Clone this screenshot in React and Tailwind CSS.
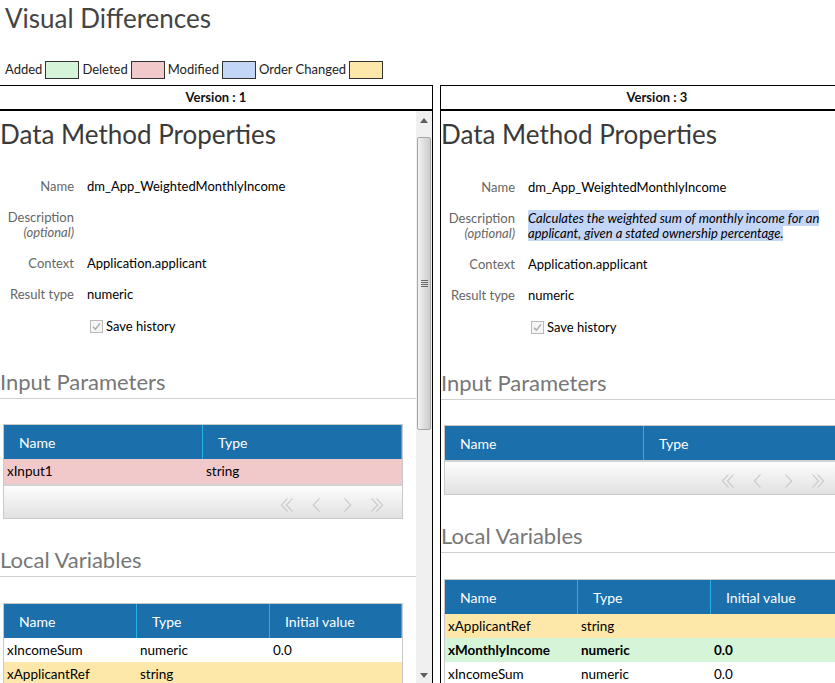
import React from 'react';

const legend = [
  { label: 'Added', swatch: 'bg-[#d5f5d8]' },
  { label: 'Deleted', swatch: 'bg-[#f2c9cb]' },
  { label: 'Modified', swatch: 'bg-[#c4d6f8]' },
  { label: 'Order Changed', swatch: 'bg-[#fde8a9]' },
];

const Chevrons = ({ d }) => (
  <svg width="18" height="18" viewBox="0 0 18 18">
    <path d={d} fill="none" stroke="#c4c4c4" strokeWidth="1.1" />
  </svg>
);

const Pager = () => (
  <div className="flex h-[34px] items-center justify-end gap-[12px] border-t-2 border-[#d2d2d2] bg-gradient-to-b from-[#fdfdfd] to-[#e1e1e1] pr-[16px] pt-[6px]">
    <Chevrons d="M9.5 2.5 L3.5 9 L9.5 15.5 M14.5 2.5 L8.5 9 L14.5 15.5" />
    <Chevrons d="M11.5 2.5 L5.5 9 L11.5 15.5" />
    <Chevrons d="M6.5 2.5 L12.5 9 L6.5 15.5" />
    <Chevrons d="M3.5 2.5 L9.5 9 L3.5 15.5 M8.5 2.5 L14.5 9 L8.5 15.5" />
  </div>
);

const Table = ({ cols, rows, rowH = 'h-[24px]', pager, headH = 'h-[34px]' }) => (
  <div className="ml-[3px] w-[400px] shrink-0 border border-[#c9c9c9]">
    <div className={`flex ${headH} bg-[#1b6fab]`}>
      {cols.map((c) => (
        <div
          key={c.label}
          className={`${c.w} flex items-center border-r border-[#27b2e6] pl-[15px] text-[14px] text-white`}
        >
          {c.label}
        </div>
      ))}
    </div>
    {rows.map((r) => (
      <div key={r.cells[0]} className={`flex ${rowH} ${r.tone} ${r.bold ? 'font-bold' : ''}`}>
        {r.cells.map((cell, i) => (
          <div key={i} className={`${cols[i].w} flex items-center pl-[3px] text-[13.5px] text-black`}>
            {cell}
          </div>
        ))}
      </div>
    ))}
    {pager && <Pager />}
  </div>
);

const Scrollbar = () => (
  <div className="flex w-[16px] shrink-0 flex-col items-center bg-[#f0f0f0]">
    <div className="flex h-[19px] items-center justify-center">
      <svg width="8" height="5" viewBox="0 0 8 5">
        <path d="M0 5 L4 0 L8 5 Z" fill="#606060" />
      </svg>
    </div>
    <div className="mt-[7px] flex h-[293px] w-[14px] items-center justify-center rounded-[2px] border border-[#a6a6a6] bg-gradient-to-r from-[#f2f2f2] via-[#dedede] to-[#cdcdcd]">
      <div className="flex flex-col gap-[1px]">
        <div className="h-[1px] w-[7px] bg-[#6a6a6a]" />
        <div className="h-[1px] w-[7px] bg-[#6a6a6a]" />
        <div className="h-[1px] w-[7px] bg-[#6a6a6a]" />
        <div className="h-[1px] w-[7px] bg-[#6a6a6a]" />
      </div>
    </div>
    <div className="flex-1" />
    <div className="flex h-[15px] items-center justify-center">
      <svg width="8" height="5" viewBox="0 0 8 5">
        <path d="M0 0 L4 5 L8 0 Z" fill="#606060" />
      </svg>
    </div>
  </div>
);

const Prop = ({ label, optional, children }) => (
  <div className="flex">
    <div className="w-[74px] shrink-0 text-right text-[#666]">
      {label}
      {optional && <div className="italic">(optional)</div>}
    </div>
    <div className="ml-[13px] text-black">{children}</div>
  </div>
);

const SectionTitle = ({ children, mt }) => (
  <h3 className={`${mt} border-b border-[#d0d0d0] pb-[4px] text-[22px] leading-[24px] text-[#777]`}>{children}</h3>
);

const Panel = ({ version, description, inputRows, localRows, right }) => (
  <div
    className={`flex shrink-0 flex-col border-black ${right ? 'ml-[7px] w-[434px] border-l border-r' : 'w-[433px] border-r'}`}
  >
    <div className="flex h-[26px] shrink-0 items-center justify-center border-t border-b-2 border-black text-[13px] font-bold text-[#111]">
      Version : {version}
    </div>
    <div className="flex min-h-0 flex-1">
      <div className="min-w-0 flex-1 overflow-hidden">
        <h2 className="mt-[7px] whitespace-nowrap text-[26px] leading-[32px] text-[#3a3a3a]">Data Method Properties</h2>
        <div className={`${right ? 'mt-[30px]' : 'mt-[29px]'} flex flex-col gap-[16px] text-[13px] leading-[15px]`}>
          <Prop label="Name">dm_App_WeightedMonthlyIncome</Prop>
          <Prop label="Description" optional>
            {description ? (
              <span className="bg-[#c4d6f8] italic">
                Calculates the weighted sum of monthly income for an
                <br />
                applicant, given a stated ownership percentage.
              </span>
            ) : null}
          </Prop>
          <Prop label="Context">Application.applicant</Prop>
          <Prop label="Result type">numeric</Prop>
          <div className="flex h-[16px] items-center pl-[90px]">
            <svg width="13" height="13" viewBox="0 0 13 13">
              <rect x="0.5" y="0.5" width="12" height="12" fill="#f5f5f5" stroke="#b9b9b9" />
              <path d="M3 6.8 L5.4 9.3 L10 3.4" fill="none" stroke="#a9a9a9" strokeWidth="1.4" />
            </svg>
            <span className="ml-[3px] text-[13px] text-black">Save history</span>
          </div>
        </div>
        <SectionTitle mt="mt-[36px]">Input Parameters</SectionTitle>
        <div className="mt-[25px]">
          <Table
            cols={[
              { label: 'Name', w: 'w-[199px]' },
              { label: 'Type', w: 'w-[199px]' },
            ]}
            rows={inputRows}
            rowH="h-[25px]"
            pager
          />
        </div>
        <SectionTitle mt="mt-[29px]">Local Variables</SectionTitle>
        <div className="mt-[26px]">
          <Table
            cols={[
              { label: 'Name', w: 'w-[133px]' },
              { label: 'Type', w: 'w-[133px]' },
              { label: 'Initial value', w: 'w-[132px]' },
            ]}
            rows={localRows}
          />
        </div>
      </div>
      <Scrollbar />
    </div>
  </div>
);

export default function App() {
  return (
    <div className="flex h-[683px] w-[835px] flex-col overflow-hidden bg-white font-['Lato',sans-serif] text-black">
      <h1 className="pl-[5px] pt-[3px] text-[26px] font-normal leading-[30px] text-[#444]">Visual Differences</h1>
      <div className="mt-[28px] flex h-[18px] items-center pl-[5px] text-[13px] text-[#222]">
        {legend.map((l) => (
          <React.Fragment key={l.label}>
            <span>{l.label}</span>
            <span className={`ml-[3px] mr-[3px] h-[18px] w-[34px] border border-[#333] ${l.swatch}`} />
          </React.Fragment>
        ))}
      </div>
      <div className="mt-[6px] flex min-h-0 flex-1">
        <Panel
          version="1"
          inputRows={[{ cells: ['xInput1', 'string'], tone: 'bg-[#f2c9cb]' }]}
          localRows={[
            { cells: ['xIncomeSum', 'numeric', '0.0'], tone: 'bg-white' },
            { cells: ['xApplicantRef', 'string', ''], tone: 'bg-[#fde8a9]' },
          ]}
        />
        <Panel
          right
          version="3"
          description
          inputRows={[]}
          localRows={[
            { cells: ['xApplicantRef', 'string', ''], tone: 'bg-[#fde8a9]' },
            { cells: ['xMonthlyIncome', 'numeric', '0.0'], tone: 'bg-[#d5f5d8]', bold: true },
            { cells: ['xIncomeSum', 'numeric', '0.0'], tone: 'bg-white' },
          ]}
        />
      </div>
    </div>
  );
}
